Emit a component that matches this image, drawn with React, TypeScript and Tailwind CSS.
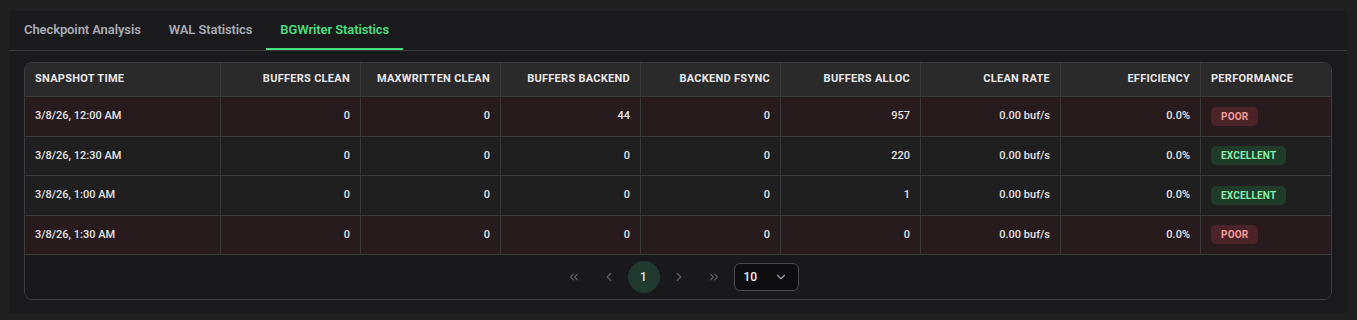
import React, { useState } from 'react';
import {
  ChevronDown,
  ChevronLeft,
  ChevronRight,
  ChevronsLeft,
  ChevronsRight,
} from 'lucide-react';

const tabs = ['Checkpoint Analysis', 'WAL Statistics', 'BGWriter Statistics'];

const columns = [
  { label: 'Snapshot Time', align: 'left' },
  { label: 'Buffers Clean', align: 'right' },
  { label: 'Maxwritten Clean', align: 'right' },
  { label: 'Buffers Backend', align: 'right' },
  { label: 'Backend Fsync', align: 'right' },
  { label: 'Buffers Alloc', align: 'right' },
  { label: 'Clean Rate', align: 'right' },
  { label: 'Efficiency', align: 'right' },
  { label: 'Performance', align: 'left' },
];

const snapshots = [
  { time: '3/8/26, 12:00 AM', clean: 0, maxwritten: 0, backend: 44, fsync: 0, alloc: 957, rate: '0.00 buf/s', efficiency: '0.0%', perf: 'POOR' },
  { time: '3/8/26, 12:30 AM', clean: 0, maxwritten: 0, backend: 0, fsync: 0, alloc: 220, rate: '0.00 buf/s', efficiency: '0.0%', perf: 'EXCELLENT' },
  { time: '3/8/26, 1:00 AM', clean: 0, maxwritten: 0, backend: 0, fsync: 0, alloc: 1, rate: '0.00 buf/s', efficiency: '0.0%', perf: 'EXCELLENT' },
  { time: '3/8/26, 1:30 AM', clean: 0, maxwritten: 0, backend: 0, fsync: 0, alloc: 0, rate: '0.00 buf/s', efficiency: '0.0%', perf: 'POOR' },
];

function classNames(...classes: any) {
  return classes.filter(Boolean).join(' ');
}

const Cell = ({ children, right, first }: { children: React.ReactNode; right?: boolean; first?: boolean }) => (
  <div
    className={classNames(
      'flex items-center px-2.5',
      right ? 'justify-end' : 'justify-start',
      !first && 'border-l border-[#3a3a3a]'
    )}
  >
    {children}
  </div>
);

const Badge = ({ perf }: { perf: string }) => (
  <span
    className={classNames(
      'flex h-[19px] items-center rounded-[5px] px-2.5 text-[10px] font-bold tracking-[0.2px]',
      perf === 'POOR' ? 'bg-[#4a2428] text-[#f59a9a]' : 'bg-[#1f3b29] text-[#86efac]'
    )}
  >
    {perf}
  </span>
);

export default function App() {
  const [selectedTab, setSelectedTab] = useState(2);

  return (
    <div className="h-[320px] w-full bg-[#1f1f1f] pl-[9px] pr-[10px] pt-[11px] font-['Roboto','Noto_Sans',sans-serif]">
      <div className="h-[302px] bg-[#1a1a1c]">
        {/* tabs */}
        <div className="flex border-b border-[#3a3a3a] pl-px">
          {tabs.map((tab, i) => (
            <button
              key={tab}
              onClick={() => setSelectedTab(i)}
              className={classNames(
                'h-[39px] border-b-2 px-3.5 pt-px text-[13px] font-semibold tracking-[-0.1px]',
                selectedTab === i
                  ? 'border-[#4ade80] text-[#4ade80]'
                  : 'border-transparent text-[#a9abb6]'
              )}
            >
              {tab}
            </button>
          ))}
        </div>

        <div className="px-[15px] pt-[11px]">
          <div className="overflow-hidden rounded-lg border border-[#3d3d3d] text-[11px] text-[#e4e4e7]">
            {/* header */}
            <div className="grid h-[33px] grid-cols-[195px_repeat(7,140px)_1fr] bg-[#2a2a2a] font-bold uppercase tracking-wide text-[#e8e8ea]">
              {columns.map((col, i) => (
                <Cell key={col.label} right={col.align === 'right'} first={i === 0}>
                  {col.label}
                </Cell>
              ))}
            </div>

            {/* rows */}
            {snapshots.map((s) => (
              <div
                key={s.time}
                className={classNames(
                  'grid h-[39.5px] grid-cols-[195px_repeat(7,140px)_1fr] border-t border-[#3a3a3a] font-medium',
                  s.perf === 'POOR' ? 'bg-[#281b1e]' : 'bg-[#1f1f1f]'
                )}
              >
                <Cell first>{s.time}</Cell>
                <Cell right>{s.clean}</Cell>
                <Cell right>{s.maxwritten}</Cell>
                <Cell right>{s.backend}</Cell>
                <Cell right>{s.fsync}</Cell>
                <Cell right>{s.alloc}</Cell>
                <Cell right>{s.rate}</Cell>
                <Cell right>{s.efficiency}</Cell>
                <Cell>
                  <Badge perf={s.perf} />
                </Cell>
              </div>
            ))}

            {/* pagination */}
            <div className="flex h-[45px] items-center justify-center gap-[3px] border-t border-[#3a3a3a] bg-[#19191b]">
              <button className="flex h-8 w-8 items-center justify-center text-[#5e5e62]">
                <ChevronsLeft size={14} strokeWidth={2} />
              </button>
              <button className="flex h-8 w-8 items-center justify-center text-[#5e5e62]">
                <ChevronLeft size={14} strokeWidth={2} />
              </button>
              <button className="flex h-8 w-8 items-center justify-center rounded-full bg-[#213a30] text-[12px] font-medium text-[#e4e4e7]">
                1
              </button>
              <button className="flex h-8 w-8 items-center justify-center text-[#5e5e62]">
                <ChevronRight size={14} strokeWidth={2} />
              </button>
              <button className="flex h-8 w-8 items-center justify-center text-[#5e5e62]">
                <ChevronsRight size={14} strokeWidth={2} />
              </button>
              <div className="ml-px flex h-7 w-[65px] items-center justify-between rounded-md border border-[#4a4a4e] bg-[#0d0d0f] pl-[9px] pr-[10px] text-[12px] font-medium text-[#f4f4f5]">
                <span>10</span>
                <ChevronDown size={14} className="text-[#a1a1aa]" />
              </div>
            </div>
          </div>
        </div>
      </div>
    </div>
  );
}
